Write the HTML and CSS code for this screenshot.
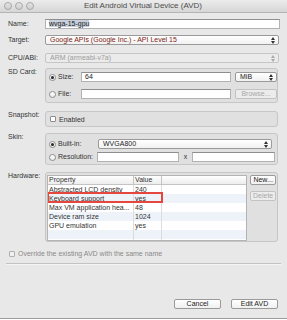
FILE: index.html
```html
<!DOCTYPE html>
<html lang="en">
<head>
  <meta charset="UTF-8" />
  <meta name="viewport" content="width=device-width, initial-scale=1.0" />
  <link rel="stylesheet" href="styles.css">
</head>
<body>
  <div class="window">
    <div class="titlebar">
      <div class="lights"><span></span><span></span><span></span></div>
      <div class="title">Edit Android Virtual Device (AVD)</div>
    </div>

    <div class="form">
      <div class="row mt-name">
        <div class="label">Name:</div>
        <div class="text-field"><span class="hl">wvga-15-gpu</span></div>
      </div>

      <div class="row mt-target">
        <div class="label">Target:</div>
        <div class="combo target">
          <span>Google APIs (Google Inc.) - API Level 15</span>
          <svg class="arrows" width="4" height="7" viewBox="0 0 4 7"><path d="M0 3 L2 0 L4 3 Z M0 4 L2 7 L4 4 Z" fill="#333"/></svg>
        </div>
      </div>

      <div class="row mt-cpu">
        <div class="label">CPU/ABI:</div>
        <div class="combo disabled">
          <span>ARM (armeabi-v7a)</span>
          <svg class="arrows" width="4" height="7" viewBox="0 0 4 7"><path d="M0 3 L2 0 L4 3 Z M0 4 L2 7 L4 4 Z" fill="#aaa"/></svg>
        </div>
      </div>

      <div class="row mt-sd">
        <div class="label group-label">SD Card:</div>
        <div class="group sd">
          <div class="opt"><span class="radio on"></span>Size:</div>
          <div class="text-field">64</div>
          <div class="combo small">
            <span>MiB</span>
            <svg class="arrows" width="4" height="7" viewBox="0 0 4 7"><path d="M0 3 L2 0 L4 3 Z M0 4 L2 7 L4 4 Z" fill="#333"/></svg>
          </div>
          <div class="opt"><span class="radio"></span>File:</div>
          <div class="text-field"></div>
          <div class="button disabled">Browse...</div>
        </div>
      </div>

      <div class="row mt-snap">
        <div class="label group-label">Snapshot:</div>
        <div class="group snap">
          <span class="check"></span>Enabled
        </div>
      </div>

      <div class="row mt-skin">
        <div class="label group-label">Skin:</div>
        <div class="group skin">
          <div class="opt"><span class="radio on"></span>Built-in:</div>
          <div class="combo">
            <span>WVGA800</span>
            <svg class="arrows" width="4" height="7" viewBox="0 0 4 7"><path d="M0 3 L2 0 L4 3 Z M0 4 L2 7 L4 4 Z" fill="#333"/></svg>
          </div>
          <div class="opt"><span class="radio"></span>Resolution:</div>
          <div class="res">
            <div class="text-field"></div>
            <span class="times">x</span>
            <div class="text-field"></div>
          </div>
        </div>
      </div>

      <div class="row mt-hw">
        <div class="label group-label">Hardware:</div>
        <div class="group hw">
          <div class="table">
            <div class="thead">
              <div class="c1">Property</div><div class="c2">Value</div><div class="c3"></div>
            </div>
            <div class="tr"><div class="c1">Abstracted LCD density</div><div class="c2">240</div><div class="c3"></div></div>
            <div class="tr"><div class="c1">Keyboard support</div><div class="c2">yes</div><div class="c3"></div></div>
            <div class="tr"><div class="c1">Max VM application hea...</div><div class="c2">48</div><div class="c3"></div></div>
            <div class="tr"><div class="c1">Device ram size</div><div class="c2">1024</div><div class="c3"></div></div>
            <div class="tr"><div class="c1">GPU emulation</div><div class="c2">yes</div><div class="c3"></div></div>
            <div class="tr"><div class="c1"></div><div class="c2"></div><div class="c3"></div></div>
            <div class="tfill"><div class="c1"></div><div class="c2"></div><div class="c3"></div></div>
            <div class="mark"></div>
          </div>
          <div class="side">
            <div class="button">New...</div>
            <div class="button disabled">Delete</div>
          </div>
        </div>
      </div>

      <div class="override">
        <span class="check disabled"></span>Override the existing AVD with the same name
      </div>

      <div class="separator"></div>

      <div class="actions">
        <div class="button wide">Cancel</div>
        <div class="button wide">Edit AVD</div>
      </div>
    </div>
  </div>
</body>
</html>
```

FILE: styles.css
```css
body {
  margin: 0;
  background: #ffffff;
  font-family: "Liberation Sans", Arial, sans-serif;
  font-size: 7px;
  color: #333;
}

.window {
  width: 287px;
  height: 319px;
  box-sizing: border-box;
  background: #e8e8e8;
  border-bottom: 1px solid #9c9c9c;
  overflow: hidden;
}

/* title bar */
.titlebar {
  height: 13px;
  box-sizing: border-box;
  display: flex;
  align-items: center;
  background: linear-gradient(#ececec, #d6d6d6);
  border-bottom: 1px solid #b4b4b4;
}

.lights {
  display: flex;
  gap: 3px;
  padding-left: 4px;
  width: 80px;
}

.lights span {
  width: 6px;
  height: 6px;
  border-radius: 50%;
  border: 0.5px solid #a8a8a8;
  background: linear-gradient(#e4e4e4, #cfcfcf);
}

.title {
  font-size: 8px;
  color: #4d4d4d;
  line-height: 12px;
  margin-left: 0;
}

/* form rows */
.form {
  padding-left: 8px;
}

.row {
  display: grid;
  grid-template-columns: 37px 235px;
}

.label {
  line-height: 10px;
  color: #333;
}

.group-label {
  line-height: 7px;
}

.mt-name { margin-top: 6px; }
.mt-target { margin-top: 6px; }
.mt-cpu { margin-top: 8px; }
.mt-sd { margin-top: 5px; }
.mt-snap { margin-top: 8px; }
.mt-skin { margin-top: 6px; }
.mt-hw { margin-top: 7px; }

.text-field {
  height: 10px;
  box-sizing: border-box;
  background: #fff;
  border: 1px solid #b2b2b2;
  border-top-color: #8e8e8e;
  line-height: 8px;
  padding: 0 3px;
  color: #222;
}

.hl {
  background: #c7d0dc;
}

.combo {
  height: 10px;
  box-sizing: border-box;
  display: flex;
  align-items: center;
  justify-content: space-between;
  background: linear-gradient(#ffffff, #f1f1f1);
  border: 1px solid #9a9a9a;
  border-radius: 2px;
  padding: 0 3px 0 4px;
  line-height: 8px;
  color: #222;
}

.combo.target {
  margin-right: 1px;
  color: #7e2417;
}

.combo.disabled {
  background: #ebebeb;
  border-color: #c6c6c6;
  color: #9c9c9c;
  margin-right: 1px;
}

.arrows {
  display: block;
}

/* group boxes */
.group {
  box-sizing: border-box;
  margin-right: 2px;
  background: #e0e0e0;
  border: 1px solid #c6c6c6;
  border-radius: 3px;
}

.group.sd {
  height: 35px;
  display: grid;
  grid-template-columns: 28px 150px 42px;
  column-gap: 4px;
  row-gap: 7px;
  align-content: start;
  padding: 3px 0 0 3px;
}

.group.snap {
  height: 16px;
  display: flex;
  align-items: center;
  padding-left: 4px;
}

.group.skin {
  height: 32px;
  display: grid;
  grid-template-columns: 49px 174px;
  row-gap: 3px;
  align-content: start;
  padding: 5px 0 0 3px;
}

.res {
  display: grid;
  grid-template-columns: 82px 13px 83px;
  margin-left: -1px;
}

.times {
  text-align: center;
  line-height: 10px;
}

.opt {
  display: flex;
  align-items: center;
  line-height: 10px;
  color: #333;
}

.radio {
  width: 7px;
  height: 7px;
  box-sizing: border-box;
  border-radius: 50%;
  border: 1px solid #8c8c8c;
  background: linear-gradient(#ffffff, #ececec);
  margin-right: 2px;
  display: flex;
  align-items: center;
  justify-content: center;
}

.radio.on::after {
  content: "";
  width: 3px;
  height: 3px;
  border-radius: 50%;
  background: #222;
}

.check {
  width: 6px;
  height: 6px;
  box-sizing: border-box;
  border: 1px solid #8c8c8c;
  border-radius: 1px;
  background: #fff;
  margin-right: 3px;
}

.check.disabled {
  border-color: #b0b0b0;
  background: #f0f0f0;
}

/* buttons */
.button {
  height: 10px;
  box-sizing: border-box;
  border: 1px solid #9a9a9a;
  border-radius: 2px;
  background: linear-gradient(#ffffff, #f0f0f0);
  text-align: center;
  line-height: 8px;
  color: #222;
}

.button.disabled {
  color: #a8a8a8;
  border-color: #c2c2c2;
  background: #ececec;
}

/* hardware table */
.group.hw {
  height: 70px;
  display: flex;
  padding: 2px 1px 1px 1px;
}

.table {
  position: relative;
  width: 202px;
  height: 66px;
  box-sizing: border-box;
  background: #fff;
  border: 1px solid #b4b4b4;
  display: flex;
  flex-direction: column;
  overflow: hidden;
}

.thead,
.tr,
.tfill {
  display: grid;
  grid-template-columns: 86px 28px 1fr;
}

.thead {
  height: 8px;
  line-height: 8px;
  background: linear-gradient(#ffffff, #ededed);
  border-bottom: 1px solid #c4c4c4;
}

.tr {
  height: 9px;
  line-height: 9px;
}

.tr:nth-child(odd) {
  background: #eef3fa;
}

.tfill {
  flex: 1;
}

.c1 {
  padding-left: 1px;
  border-right: 1px solid #dcdcdc;
  white-space: nowrap;
  overflow: hidden;
}

.c2 {
  padding-left: 1px;
  border-right: 1px solid #dcdcdc;
}

.thead .c1,
.thead .c2 {
  border-right-color: #c4c4c4;
}

.mark {
  position: absolute;
  left: -1px;
  top: 16px;
  width: 116px;
  height: 11px;
  box-sizing: border-box;
  border: 2px solid #e5463d;
}

.side {
  display: flex;
  flex-direction: column;
  gap: 6px;
  margin-left: 3px;
  width: 26px;
}

/* bottom */
.override {
  display: flex;
  align-items: center;
  margin-top: 8px;
  line-height: 8px;
  color: #8a8a8a;
  padding-left: 1px;
}

.separator {
  height: 1px;
  background: #c2c2c2;
  margin: 5px 6px 0 -2px;
  border-bottom: 1px solid #f4f4f4;
}

.actions {
  display: flex;
  justify-content: flex-end;
  gap: 10px;
  margin-top: 34px;
  padding-right: 9px;
}

.button.wide {
  width: 47px;
}
```
